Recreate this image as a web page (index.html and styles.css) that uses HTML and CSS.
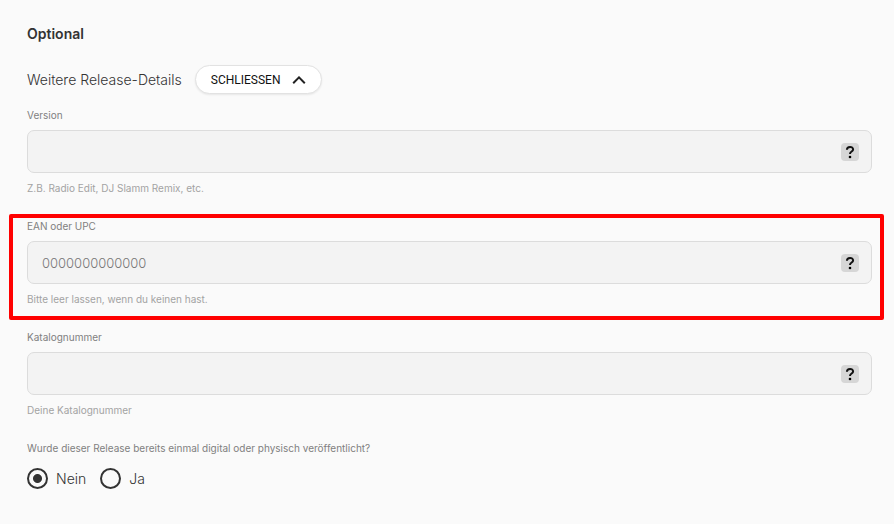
FILE: index.html
```
<!DOCTYPE html>
<html lang="de">
<head>
  <meta charset="UTF-8" />
  <meta name="viewport" content="width=device-width, initial-scale=1.0"/>
  <title>Release-Details</title>
  <link rel="stylesheet" href="styles.css">
</head>
<body>
  <form class="release-form">
    <h2>Optional</h2>

    <div class="details-header">
      <span class="details-title">Weitere Release-Details</span>
      <button type="button" class="toggle-btn">
        SCHLIESSEN
        <svg class="toggle-icon" viewBox="0 0 14 8" aria-hidden="true"><path d="M1.2 7.2 L7 1.4 L12.8 7.2"/></svg>
      </button>
    </div>

    <!-- Text fields -->
    <div class="field-list">
      <div class="field">
        <label for="version">Version</label>
        <div class="input-box">
          <input type="text" id="version">
          <button type="button" class="help-btn" aria-label="Hilfe">
            <svg viewBox="0 0 18 18" aria-hidden="true"><path d="M5.9 6.8 C6 3 12.1 3 12.1 6.4 C12.1 8.6 9 8.4 9 11"/><circle cx="9" cy="14" r="1.3"/></svg>
          </button>
        </div>
        <p class="hint">Z.B. Radio Edit, DJ Slamm Remix, etc.</p>
      </div>

      <div class="field highlighted">
        <label for="ean">EAN oder UPC</label>
        <div class="input-box">
          <input type="text" id="ean" placeholder="0000000000000">
          <button type="button" class="help-btn" aria-label="Hilfe">
            <svg viewBox="0 0 18 18" aria-hidden="true"><path d="M5.9 6.8 C6 3 12.1 3 12.1 6.4 C12.1 8.6 9 8.4 9 11"/><circle cx="9" cy="14" r="1.3"/></svg>
          </button>
        </div>
        <p class="hint">Bitte leer lassen, wenn du keinen hast.</p>
      </div>

      <div class="field">
        <label for="catalog">Katalognummer</label>
        <div class="input-box">
          <input type="text" id="catalog">
          <button type="button" class="help-btn" aria-label="Hilfe">
            <svg viewBox="0 0 18 18" aria-hidden="true"><path d="M5.9 6.8 C6 3 12.1 3 12.1 6.4 C12.1 8.6 9 8.4 9 11"/><circle cx="9" cy="14" r="1.3"/></svg>
          </button>
        </div>
        <p class="hint">Deine Katalognummer</p>
      </div>

      <!-- Previously released -->
      <fieldset class="radio-group">
        <legend>Wurde dieser Release bereits einmal digital oder physisch veröffentlicht?</legend>
        <div class="radio-options">
          <label class="radio"><input type="radio" name="released" checked>Nein</label>
          <label class="radio"><input type="radio" name="released">Ja</label>
        </div>
      </fieldset>
    </div>
  </form>
</body>
</html>
```
FILE: styles.css
```
/* Reset & Base */
* {
  margin: 0;
  padding: 0;
  box-sizing: border-box;
}

body {
  font-family: Inter, "Liberation Sans", sans-serif;
  font-size: 14px;
  line-height: 20px;
  color: #333;
  background-color: #fafafa;
}

button,
input {
  font-family: inherit;
}

.release-form {
  padding: 24px 22px 32px 27px;
}

h2 {
  font-size: 14px;
  font-weight: 600;
  color: #333;
}

/* Header row */
.details-header {
  display: flex;
  align-items: center;
  gap: 13px;
  margin: 21px 0 13px;
}

.toggle-btn {
  display: flex;
  align-items: center;
  gap: 11px;
  height: 29px;
  padding: 0 15px;
  font-family: Roboto, sans-serif;
  font-size: 12px;
  color: #111;
  background: white;
  border: 1px solid #e2e2e2;
  border-radius: 15px;
  box-shadow: 0 1px 2px rgba(0, 0, 0, 0.08);
  cursor: pointer;
}

.toggle-icon {
  width: 14px;
  height: 8px;
  fill: none;
  stroke: #222;
  stroke-width: 2;
}

/* Fields */
.field-list {
  display: flex;
  flex-direction: column;
  gap: 22px;
}

.field {
  position: relative;
  display: flex;
  flex-direction: column;
  gap: 7px;
}

.field label,
.hint,
legend {
  font-size: 10px;
  line-height: 16px;
  color: #808080;
}

.field .hint {
  color: #a3a3a3;
}

.input-box {
  display: flex;
  align-items: center;
  height: 43px;
  padding: 0 12px 0 14px;
  background: #f3f3f3;
  border: 1px solid #dcdcdc;
  border-radius: 7px;
}

.input-box input {
  flex: 1;
  min-width: 0;
  height: 100%;
  font-size: 13px;
  font-weight: 300;
  color: #333;
  background: none;
  border: none;
  outline: none;
}

.input-box input::placeholder {
  color: #777;
}

.help-btn {
  width: 18px;
  height: 18px;
  background: #d6d6d6;
  border: none;
  border-radius: 4px;
  cursor: pointer;
}

.help-btn svg {
  display: block;
  width: 18px;
  height: 18px;
}

.help-btn path {
  fill: none;
  stroke: #111;
  stroke-width: 2;
}

/* Red frame around the marked field */
.highlighted::after {
  content: "";
  position: absolute;
  top: -4px;
  right: -12px;
  bottom: -13px;
  left: -18px;
  border: 4px solid #ff0000;
  border-radius: 2px;
  pointer-events: none;
}

/* Radio buttons */
.radio-group {
  border: none;
}

.radio-options {
  display: flex;
  gap: 14px;
  margin-top: 12px;
}

.radio {
  display: flex;
  align-items: center;
  gap: 8px;
}

.radio input {
  appearance: none;
  width: 21px;
  height: 21px;
  border: 2px solid #333;
  border-radius: 50%;
}

.radio input:checked {
  background: radial-gradient(circle, #333 4px, transparent 5px);
}

.details-title,
.radio {
  font-weight: 300;
}
```
